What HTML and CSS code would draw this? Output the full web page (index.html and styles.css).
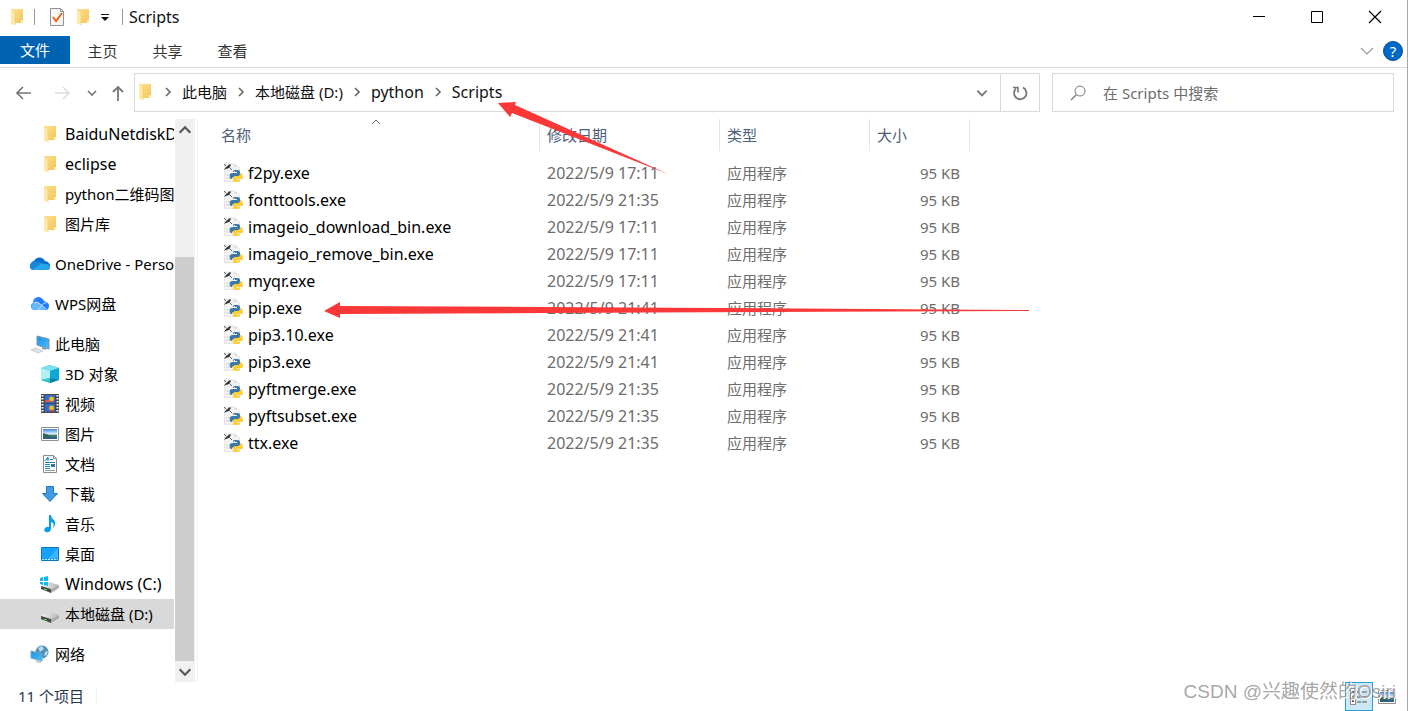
FILE: index.html
```html
<!DOCTYPE html>
<html lang="zh-CN">
<head>
<meta charset="utf-8">
<title>Scripts</title>
<link rel="stylesheet" href="styles.css">
</head>
<body>
<svg class="defs" aria-hidden="true">
  <defs>
    <linearGradient id="gold" x1="0" x2="1" y1="0" y2="1"><stop offset="0" stop-color="#ffe08a"/><stop offset="1" stop-color="#f0c65c"/></linearGradient>
    <linearGradient id="sky" x1="0" x2="1" y1="0" y2="1"><stop offset="0" stop-color="#1a8fe3"/><stop offset="1" stop-color="#4cc0ff"/></linearGradient>
    <linearGradient id="photo" x1="0" x2="0" y1="0" y2="1"><stop offset="0" stop-color="#3d85df"/><stop offset=".5" stop-color="#e2f5fa"/><stop offset=".65" stop-color="#477966"/><stop offset="1" stop-color="#245898"/></linearGradient>
    <linearGradient id="metal" x1="0" x2="1"><stop offset="0" stop-color="#f2f2f2"/><stop offset="1" stop-color="#b5b5b9"/></linearGradient>
  </defs>
  <symbol id="folder" viewBox="0 0 20 20"><path d="M5 2h11v14H7z" fill="url(#gold)"/><path d="M14 13h2v3h-2z" fill="#fff0b4"/><path d="M4 2l4 3v13l-4-1z" fill="#ffe9a6"/><path d="M4 2l4 3v13" fill="none" stroke="#eccb75" stroke-width=".6"/></symbol>
  <symbol id="python" viewBox="0 0 20 20"><path d="M1.500 1h11l4 4v13.500h-15z" fill="#f3f3f3" stroke="#dcdcdc" stroke-dasharray="2 1"/><path d="M3 12h4M3 15h5M11 3h3" stroke="#d4d4d4"/><path d="M1 7l2-3 4-3 1 1-2 3-3 1z" fill="#34383b"/><path d="M3 3L1 1M6 4l3 3" stroke="#666"/><path d="M11 7h3q3 0 3 2v3q0 2-2 2h-4q-2 0-2 2H8q-2-1-1-5 1-1 3-1h4V9h-4V8z" fill="#3b78a9"/><path d="M17 10h1q2 1 2 4t-2 2h-4v1h3v1q-1 1-4 1-3 0-3-2v-2q0-2 3-2h2q2 0 2-3z" fill="#ffce35"/><circle cx="11.500" cy="8.500" r=".6" fill="#fff"/></symbol>
  <symbol id="cloud" viewBox="0 0 20 20"><path d="M1 13a4 4 0 0 1 3-6 6 6 0 0 1 11 0 5 5 0 0 1 4 8H4z" fill="#0a6fc8"/><path d="M1 14q0-5 5-6l9 2q5 0 5 4 0 2-3 2H4q-3 0-3-2z" fill="#28a6ec"/><path d="M5 7q-6 2-5 7l2 2 10-7z" fill="#1586da"/></symbol>
  <symbol id="wps" viewBox="0 0 20 20"><path d="M3 9q0-5 5-6 4 0 6 4 5 1 5 5 0 4-4 4H5q-4 0-4-4 0-2 2-3z" fill="#237dff"/><path d="M2 11q3-6 7-2l7 6-2 1H5q-5-1-3-5z" fill="#66b8ff"/><path d="M4 9q4-2 6 1l6 5M8 16l5-6q2-2 4-1" stroke="#d6efff" fill="none" stroke-width=".8"/></symbol>
  <symbol id="pc" viewBox="0 0 20 20"><path d="M7 2l12 3v10L7 11z" fill="url(#sky)" stroke="#7895a8"/><path d="M1 16l4-2 8 3-5 2z" fill="#e1e4e7" stroke="#b9c0c5" stroke-width=".7"/><path d="M12 13v2l4 1v-2z" fill="#909da7"/></symbol>
  <symbol id="cube" viewBox="0 0 20 20"><path d="M10 1l9 3v12l-9 3-9-3V4z" fill="#20b8d7"/><path d="M1 4l9-3 9 3-9 3z" fill="#7de0eb"/><path d="M1 4l9 3v7l-9 2z" fill="#b2f2f3"/><path d="M10 7l9-3v12l-9-2z" fill="#0ba9d8"/><path d="M1 16l9-2v5z" fill="#37c5cc"/><path d="M10 14l9 2-9 3z" fill="#087fa7"/></symbol>
  <symbol id="film" viewBox="0 0 20 20"><path d="M1 0h18v19H1z" fill="#46484b"/><path d="M2.500 1v17M17.500 1v17" stroke="#fff" stroke-width="2" stroke-dasharray="1.500 1.500"/><path d="M5 1h10v8H5zM5 10h10v8H5z" fill="#316dcd"/><circle cx="11.500" cy="5" r="2.500" fill="#efb724"/><path d="M5 6h4v2H5zM9 7h4v1H9z" fill="#db5454"/><circle cx="11.500" cy="14" r="2.500" fill="#efb724"/><path d="M10 16h3v2h-3z" fill="#ce3430"/></symbol>
  <symbol id="image" viewBox="0 0 20 20"><path d="M1.500 3.500h17v13h-17z" fill="#fff" stroke="#929292"/><path d="M3 5h14v10H3z" fill="url(#photo)"/><path d="M3 9q5 1 8 4H3z" fill="#326451"/></symbol>
  <symbol id="doc" viewBox="0 0 20 20"><path d="M3.500 1.500h10l3 3v14h-13z" fill="#fff" stroke="#8c8c8c"/><path d="M13.500 1.500v3h3" fill="none" stroke="#8c8c8c"/><path d="M5 7l3-4v4M6 5h3M10 5.500h3M5 8.500h10M5 10.500h5M5 12.500h5M5 14.500h5" stroke="#1c83c1" fill="none"/><path d="M11 10h4v3h-4z" fill="#287ab0"/><path d="M5 16.500h10" stroke="#9a9a9a"/></symbol>
  <symbol id="down" viewBox="0 0 20 20"><path d="M6.500 2.500h7v7h4L10 17.500 2.500 9.500h4z" fill="#409ae5" stroke="#2474b9"/></symbol>
  <symbol id="note" viewBox="0 0 20 20"><path d="M9 1h2q0 3 3 5 3 4-1 8 2-5-2-6v7q-1 4-5 3-3-1-1-4 2-2 4-1z" fill="#069ff0"/></symbol>
  <symbol id="desk" viewBox="0 0 20 20"><path d="M1.500 3.500h17v13h-17z" fill="#15a1fc" stroke="#0878c7"/><path d="M18 4v10L8 15z" fill="#40b4ff"/><path d="M2 15.500h16" stroke="#b9e5ff" stroke-dasharray="2 1"/></symbol>
  <symbol id="disk" viewBox="0 0 20 20"><path d="M1 12l8-4 10 3-8 4z" fill="url(#metal)"/><path d="M1 12l10 3v4L1 15z" fill="#454847"/><path d="M11 15l8-4v3l-8 5z" fill="#aaa"/><path d="M4 15l3 1" stroke="#5be159" stroke-width="1"/></symbol>
  <symbol id="windisk" viewBox="0 0 20 20"><use href="#disk" width="20" height="20"/><path d="M0 4l3-1v4H0zM4 3l4-1v5H4zM0 8h3v3l-3-1zM4 8h4v4l-4-1z" fill="#12b9ed"/></symbol>
  <symbol id="net" viewBox="0 0 20 20"><circle cx="12" cy="8" r="6.500" fill="#4f91b3"/><path d="M8 4l4-2 2 3-4 3zM15 8l3-1-1 4-3 1z" fill="#b7dce8"/><path d="M1 7l11 3v7L1 14z" fill="url(#sky)" stroke="#69a5cc"/><path d="M6 16v2l5 1v-2" fill="#c2c8cd"/></symbol>
  <symbol id="check" viewBox="0 0 20 20"><path d="M2.500 1.500h10l3 3v14h-13z" fill="#f7f7f7" stroke="#919191"/><path d="M12.500 1.500v3h3" fill="none" stroke="#919191"/><path d="M5 10l3 4 6-8" fill="none" stroke="#f2631b" stroke-width="2"/></symbol>
  <symbol id="chev" viewBox="0 0 12 12"><path d="M2 4l4 4 4-4" fill="none" stroke="currentColor" stroke-width="1.600"/></symbol>
</svg>

<div class="window">
  <header class="titlebar">
    <svg class="ic"><use href="#folder"/></svg>
    <span class="bar"></span>
    <button class="quick" aria-label="属性"><svg class="ic"><use href="#check"/></svg></button>
    <button class="quick" aria-label="新建文件夹"><svg class="ic"><use href="#folder"/></svg></button>
    <button class="quick more" aria-label="自定义"><svg width="10" height="10"><path d="M1 2.500h8" stroke="#111"/><path d="M1 5h8L5 9z" fill="#111"/></svg></button>
    <span class="bar"></span>
    <span class="title">Scripts</span>
    <div class="controls">
      <button aria-label="最小化"><svg width="14" height="14"><path d="M1 6.500h12" stroke="#000"/></svg></button>
      <button aria-label="最大化"><svg width="14" height="14"><path d="M1.500 1.500h11v11h-11z" fill="none" stroke="#000"/></svg></button>
      <button aria-label="关闭"><svg width="14" height="14"><path d="M1 1l12 12M13 1L1 13" stroke="#000" stroke-width="1.200"/></svg></button>
    </div>
  </header>

  <nav class="ribbon">
    <button class="tab file">文件</button><button class="tab">主页</button><button class="tab">共享</button><button class="tab">查看</button>
    <button class="expand" aria-label="展开功能区"><svg width="14" height="10"><path d="M1 2l6 6 6-6" fill="none" stroke="#999" stroke-width="1.200"/></svg></button>
    <button class="help" aria-label="帮助">?</button>
  </nav>

  <div class="address">
    <div class="navs">
      <button aria-label="后退"><svg width="16" height="16"><path d="M15 8H1M7 2L1 8l6 6" fill="none" stroke="#777" stroke-width="1.600"/></svg></button>
      <button aria-label="前进"><svg width="16" height="16"><path d="M1 8h14M9 2l6 6-6 6" fill="none" stroke="#ddd" stroke-width="1.600"/></svg></button>
      <button class="recent" aria-label="最近"><svg width="12" height="12"><use href="#chev"/></svg></button>
      <button aria-label="向上"><svg width="14" height="16"><path d="M7 16V2M2 7l5-5 5 5" fill="none" stroke="#777" stroke-width="1.800"/></svg></button>
    </div>
    <div class="path">
      <svg class="ic"><use href="#folder"/></svg>
      <svg class="sep"><use href="#chev"/></svg><a href="#">此电脑</a>
      <svg class="sep"><use href="#chev"/></svg><a href="#">本地磁盘 (D:)</a>
      <svg class="sep"><use href="#chev"/></svg><a class="latin" href="#">python</a>
      <svg class="sep"><use href="#chev"/></svg><a class="latin" href="#">Scripts</a>
      <button class="drop" aria-label="以前的位置"><svg width="14" height="14"><use href="#chev"/></svg></button>
      <button class="refresh" aria-label="刷新"><svg width="18" height="18"><path d="M12 3.500a6.200 6.200 0 1 1-7 1" fill="none" stroke="#777" stroke-width="1.800"/><path d="M2 3.500h5v5" fill="none" stroke="#777" stroke-width="1.600"/></svg></button>
    </div>
    <label class="search">
      <svg width="18" height="18"><circle cx="11" cy="7" r="5" fill="none" stroke="#777"/><path d="M7.500 10.500L2 16" stroke="#777" stroke-width="1.200"/></svg>
      <input type="text" placeholder="在 Scripts 中搜索" aria-label="搜索">
    </label>
  </div>

  <div class="body">
    <nav class="tree">
      <a class="child latin" href="#"><svg class="ic"><use href="#folder"/></svg><span>BaiduNetdiskDownload</span></a>
      <a class="child latin" href="#"><svg class="ic"><use href="#folder"/></svg><span>eclipse</span></a>
      <a class="child" href="#"><svg class="ic"><use href="#folder"/></svg><span>python二维码图片</span></a>
      <a class="child" href="#"><svg class="ic"><use href="#folder"/></svg><span>图片库</span></a>
      <a class="root" href="#"><svg class="ic"><use href="#cloud"/></svg><span>OneDrive - Personal</span></a>
      <a class="root" href="#"><svg class="ic"><use href="#wps"/></svg><span>WPS网盘</span></a>
      <a class="root" href="#"><svg class="ic"><use href="#pc"/></svg><span>此电脑</span></a>
      <a class="child" href="#"><svg class="ic"><use href="#cube"/></svg><span>3D 对象</span></a>
      <a class="child" href="#"><svg class="ic"><use href="#film"/></svg><span>视频</span></a>
      <a class="child" href="#"><svg class="ic"><use href="#image"/></svg><span>图片</span></a>
      <a class="child" href="#"><svg class="ic"><use href="#doc"/></svg><span>文档</span></a>
      <a class="child" href="#"><svg class="ic"><use href="#down"/></svg><span>下载</span></a>
      <a class="child" href="#"><svg class="ic"><use href="#note"/></svg><span>音乐</span></a>
      <a class="child" href="#"><svg class="ic"><use href="#desk"/></svg><span>桌面</span></a>
      <a class="child latin" href="#"><svg class="ic"><use href="#windisk"/></svg><span>Windows (C:)</span></a>
      <a class="child selected" href="#"><svg class="ic"><use href="#disk"/></svg><span>本地磁盘 (D:)</span></a>
      <a class="root" href="#"><svg class="ic"><use href="#net"/></svg><span>网络</span></a>
    </nav>
    <div class="scroll">
      <button class="flip" aria-label="向上滚动"><svg width="16" height="16"><use href="#chev"/></svg></button>
      <div class="thumb"></div>
      <button aria-label="向下滚动"><svg width="16" height="16"><use href="#chev"/></svg></button>
    </div>
    <main class="files">
      <table>
        <colgroup><col class="c-name"><col class="c-date"><col class="c-type"><col class="c-size"></colgroup>
        <thead><tr><th>名称<svg class="sort" width="10" height="6"><path d="M1 5l4-4 4 4" fill="none" stroke="#777"/></svg></th><th>修改日期</th><th>类型</th><th>大小</th></tr></thead>
        <tbody>
          <tr><td><div class="name"><svg class="ic"><use href="#python"/></svg>f2py.exe</div></td><td class="latin">2022/5/9 17:11</td><td>应用程序</td><td>95 KB</td></tr>
          <tr><td><div class="name"><svg class="ic"><use href="#python"/></svg>fonttools.exe</div></td><td class="latin">2022/5/9 21:35</td><td>应用程序</td><td>95 KB</td></tr>
          <tr><td><div class="name"><svg class="ic"><use href="#python"/></svg>imageio_download_bin.exe</div></td><td class="latin">2022/5/9 17:11</td><td>应用程序</td><td>95 KB</td></tr>
          <tr><td><div class="name"><svg class="ic"><use href="#python"/></svg>imageio_remove_bin.exe</div></td><td class="latin">2022/5/9 17:11</td><td>应用程序</td><td>95 KB</td></tr>
          <tr><td><div class="name"><svg class="ic"><use href="#python"/></svg>myqr.exe</div></td><td class="latin">2022/5/9 17:11</td><td>应用程序</td><td>95 KB</td></tr>
          <tr><td><div class="name"><svg class="ic"><use href="#python"/></svg>pip.exe</div></td><td class="latin">2022/5/9 21:41</td><td>应用程序</td><td>95 KB</td></tr>
          <tr><td><div class="name"><svg class="ic"><use href="#python"/></svg>pip3.10.exe</div></td><td class="latin">2022/5/9 21:41</td><td>应用程序</td><td>95 KB</td></tr>
          <tr><td><div class="name"><svg class="ic"><use href="#python"/></svg>pip3.exe</div></td><td class="latin">2022/5/9 21:41</td><td>应用程序</td><td>95 KB</td></tr>
          <tr><td><div class="name"><svg class="ic"><use href="#python"/></svg>pyftmerge.exe</div></td><td class="latin">2022/5/9 21:35</td><td>应用程序</td><td>95 KB</td></tr>
          <tr><td><div class="name"><svg class="ic"><use href="#python"/></svg>pyftsubset.exe</div></td><td class="latin">2022/5/9 21:35</td><td>应用程序</td><td>95 KB</td></tr>
          <tr><td><div class="name"><svg class="ic"><use href="#python"/></svg>ttx.exe</div></td><td class="latin">2022/5/9 21:35</td><td>应用程序</td><td>95 KB</td></tr>
        </tbody>
      </table>
    </main>
  </div>

  <footer class="status">
    <span class="count">11 个项目</span>
    <div class="views">
      <button class="view on" aria-label="详细信息"><svg width="20" height="20"><path d="M1.500 1.500h5v16h-5z" fill="#fff" stroke="#888"/><path d="M3 4h2v2H3z" fill="#456"/><path d="M3 8.500h2v2H3z" fill="#c5822b"/><path d="M3 13h2v2H3z" fill="#a33"/><path d="M8 5h4m1 0h5M8 10h4m1 0h5M8 15h4m1 0h5" stroke="#555"/></svg></button>
      <button class="view" aria-label="大图标"><svg class="ic"><use href="#image"/></svg></button>
    </div>
  </footer>

  <svg class="arrows" width="720" height="330" aria-hidden="true">
    <path d="M188 13l18-1-1 3 153 69-156-61-2 4z" class="red"/>
    <path d="M14 221l16-9v4l200 1 489 3v1l-489 2-200 1v4z" class="red"/>
  </svg>
  <div class="mark">CSDN @兴趣使然的Osiri</div>
</div>
</body>
</html>
```
FILE: styles.css
```css
* { box-sizing: border-box; }
body {
  margin: 0;
  background: #fff;
  color: #111;
  font: 15px/20px "Noto Sans", "Noto Sans CJK SC", sans-serif;
}
button { border: 0; padding: 0; background: none; font: inherit; color: inherit; display: flex; align-items: center; justify-content: center; }
a { color: inherit; text-decoration: none; }
svg { flex: none; display: block; }
.defs { position: absolute; width: 0; height: 0; }
.ic { width: 20px; height: 20px; }
.latin { font-size: 16px; }
.window { position: relative; min-height: 100vh; display: flex; flex-direction: column; border-right: 1px solid #aaa5a5; overflow: hidden; }

.titlebar { display: flex; align-items: center; height: 36px; padding: 0 3px 2px 7px; }
.bar { width: 1px; height: 16px; margin: 0 6px 0 7px; background: #999; }
.titlebar .quick { width: 25px; height: 24px; }
.titlebar .bar:nth-of-type(1) { margin-right: 10px; }
.titlebar .more { width: 20px; }
.title { font-size: 16px; }
.controls { display: flex; margin-left: auto; }
.controls button { width: 58px; height: 34px; }

.ribbon { display: flex; align-items: flex-start; height: 32px; border-bottom: 1px solid #dadada; color: #333; }
.tab { width: 65px; height: 29px; }
.tab.file { width: 70px; height: 28px; background: #0063b1; color: #fff; }
.expand { width: 32px; height: 30px; margin-left: auto; }
.help { width: 20px; height: 20px; margin: 5px 4px 0 0; border: 1px solid #084c91; border-radius: 50%; background: #0068c9; color: #fff; font-size: 15px; line-height: 18px; }

.address { display: flex; height: 51px; padding: 5px 13px 7px 14px; color: #111; }
.navs { display: flex; align-items: center; width: 120px; gap: 22px; padding-left: 2px; color: #777; }
.navs .recent { margin: 0 -9px 0 -6px; }
.path { display: flex; align-items: center; flex: 1; padding-bottom: 2px; border: 1px solid #d9d9d9; }
.sep { width: 12px; height: 12px; margin: 0 8px; color: #666; transform: rotate(-90deg); }
.path .ic + .sep { margin-left: 7px; }
.drop { width: 36px; height: 37px; margin: 0 0 -2px auto; color: #777; }
.refresh { width: 39px; height: 37px; margin-bottom: -2px; border-left: 1px solid #d9d9d9; }
.search { display: flex; align-items: center; width: 342px; margin-left: 12px; padding-left: 16px; gap: 16px; border: 1px solid #d9d9d9; }
.search input { flex: 1; min-width: 0; border: 0; padding: 0; outline: 0; font: inherit; }
.search input::placeholder { color: #6d6d6d; opacity: 1; }

.body { display: flex; flex: 1; }
.tree { width: 175px; padding-right: 1px; overflow: hidden; color: #000; }
.tree a { display: flex; align-items: center; height: 30px; overflow: hidden; white-space: nowrap; gap: 5px; }
.child { padding-left: 40px; }
.root { padding-left: 30px; margin-top: 10px; }
.selected { background: #d9d9d9; }
.scroll { display: flex; flex-direction: column; width: 20px; background: #f0f0f0; color: #555; }
.scroll button { height: 21px; }
.flip svg { transform: rotate(180deg); }
.thumb { width: 19px; margin-top: 117px; flex: 1; background: #cdcdcd; }
.files { flex: 1; margin-left: 2px; padding-left: 15px; border-left: 1px solid #f2f2f2; }

table { width: 757px; table-layout: fixed; border-collapse: separate; border-spacing: 0; }
.c-name { width: 327px; }
.c-date { width: 180px; }
.c-type { width: 150px; }
.c-size { width: 100px; }
th { position: relative; height: 32px; padding: 0 7px; border-right: 1px solid #e5e5e5; color: #4c607a; font-weight: 400; text-align: left; }
th:first-child, td:first-child { padding-left: 8px; }
.sort { position: absolute; top: 0; left: 158px; }
td { height: 27px; padding: 0 7px; color: #6d6d6d; white-space: nowrap; }
td:last-child { padding-right: 10px; text-align: right; }
tbody::before { content: ""; display: block; height: 8px; }
.name { display: flex; align-items: center; gap: 5px; padding-left: 2px; color: #000; font-size: 16px; }

.status { display: flex; align-items: center; height: 29px; color: #24384f; }
.count { margin-bottom: 2px; padding: 0 12px 0 18px; border-right: 1px solid #eee; line-height: 14px; }
.views { display: flex; margin-left: auto; padding-right: 6px; }
.view { width: 28px; height: 29px; }
.view.on { border: 1px solid #26a0da; background: #cce8f6; }

.arrows { position: absolute; left: 310px; top: 90px; pointer-events: none; }
.red { fill: #fb3838; }
.mark { position: absolute; right: 11px; bottom: 6px; color: #8f8f8fcc; font: 19px/26px "Liberation Sans", "Noto Sans CJK SC", sans-serif; text-shadow: 1px 1px 0 #fff; }
```
